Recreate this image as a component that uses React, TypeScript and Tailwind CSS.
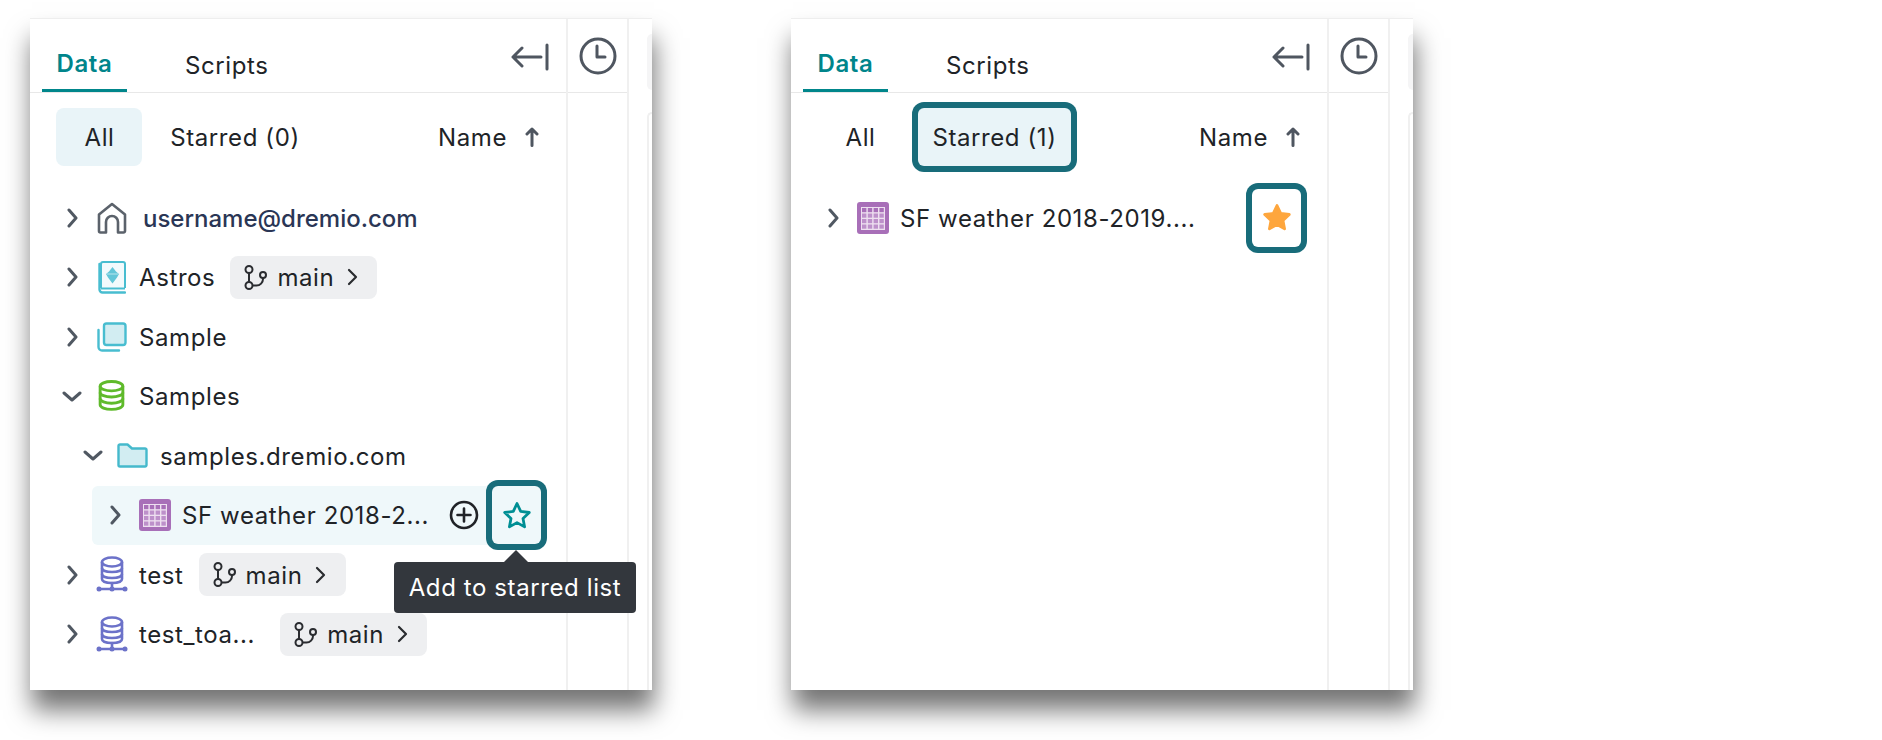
import type { ReactNode } from "react";

function Chevron({ open = false }: { open?: boolean }) {
  return open ? (
    <svg width="20" height="11" viewBox="0 0 20 11" fill="none" stroke="#505862" strokeWidth="3" strokeLinecap="round" strokeLinejoin="round">
      <path d="M2 2l8 7 8-7" />
    </svg>
  ) : (
    <svg width="11" height="20" viewBox="0 0 11 20" fill="none" stroke="#505862" strokeWidth="3" strokeLinecap="round" strokeLinejoin="round">
      <path d="M2 2l7 8-7 8" />
    </svg>
  );
}

function HomeIcon() {
  return (
    <svg width="30" height="32" viewBox="0 0 30 32" fill="none" stroke="#5b626b" strokeWidth="2.6" strokeLinejoin="round" strokeLinecap="round">
      <path d="M2 12.5L15 2l13 10.5V29a1.5 1.5 0 0 1-1.5 1.5H21V20a6 6 0 0 0-12 0v10.5H3.5A1.5 1.5 0 0 1 2 29z" />
    </svg>
  );
}

function AstrosIcon() {
  return (
    <svg width="28" height="33" viewBox="0 0 28 33" fill="none">
      <path d="M3 27V3a2 2 0 0 1 2-2h20a2 2 0 0 1 2 2v24" stroke="#48bdd0" strokeWidth="2" fill="#f2fafc" />
      <path d="M1.5 3v25.5a3 3 0 0 0 3 3H27" stroke="#48bdd0" strokeWidth="2.4" strokeLinecap="round" />
      <path d="M3 27.5h24" stroke="#48bdd0" strokeWidth="2" />
      <path d="M14.5 6l3.5 4.5 3 2.5-2 3.5-4.5 6-4.5-6-2-3.5 3-2.5z" fill="#62c6d8" />
      <path d="M9 13h11" stroke="#b8e6ee" strokeWidth="1" />
    </svg>
  );
}

function SampleIcon() {
  return (
    <svg width="30" height="30" viewBox="0 0 30 30" fill="none" stroke="#48bdd0" strokeWidth="2.4" strokeLinecap="round">
      <rect x="7" y="1.5" width="21.5" height="21.5" rx="2.5" fill="#d2edf2" />
      <path d="M1.5 8v17a3.5 3.5 0 0 0 3.5 3.5h17" />
    </svg>
  );
}

function GreenDbIcon() {
  return (
    <svg width="27" height="32" viewBox="0 0 26 31" fill="none" stroke="#5fba2b" strokeWidth="2.8">
      <ellipse cx="13" cy="6" rx="11" ry="4.5" />
      <path d="M2 6v18c0 2.5 5 4.5 11 4.5S24 26.5 24 24V6" />
      <path d="M2 12c0 2.5 5 4.5 11 4.5S24 14.5 24 12" />
      <path d="M2 18c0 2.5 5 4.5 11 4.5S24 20.5 24 18" />
    </svg>
  );
}

function NetworkDbIcon() {
  return (
    <svg width="32" height="37" viewBox="0 0 32 37" fill="none">
      <g stroke="#6c72c9" strokeWidth="2.6">
        <ellipse cx="16" cy="6" rx="10" ry="4.5" />
        <path d="M6 6v17c0 2.5 4.5 4 10 4s10-1.5 10-4V6" />
        <path d="M6 12c0 2.5 4.5 4 10 4s10-1.5 10-4" />
        <path d="M6 18c0 2.5 4.5 4 10 4s10-1.5 10-4" />
        <path d="M16 27v6M3 33h26" strokeLinecap="round" />
      </g>
      <circle cx="3" cy="33" r="2.5" fill="#6c72c9" />
      <circle cx="16" cy="33" r="2.5" fill="#6c72c9" />
      <circle cx="29" cy="33" r="2.5" fill="#6c72c9" />
    </svg>
  );
}

function FolderIcon() {
  return (
    <svg width="31" height="25" viewBox="0 0 31 25" fill="#d2edf2" stroke="#45b9cc" strokeWidth="2.4" strokeLinejoin="round">
      <path d="M1.5 3A1.5 1.5 0 0 1 3 1.5h7.5L15 5.5h13A1.5 1.5 0 0 1 29.5 7v15a1.5 1.5 0 0 1-1.5 1.5H3A1.5 1.5 0 0 1 1.5 22z" />
    </svg>
  );
}

function TableIcon() {
  const cells = [0, 1, 2, 3];
  return (
    <svg width="32" height="32" viewBox="0 0 32 32">
      <rect width="32" height="32" rx="3" fill="#a86fb8" />
      <rect x="4" y="5" width="24" height="23" fill="#eee0f0" />
      {cells.map((r) =>
        cells.map((c) => (
          <rect key={`${r}-${c}`} x={5 + c * 5.8} y={6 + r * 5.5} width="4.4" height="4.2" fill={r === 0 ? "#a86fb8" : "#bd90ca"} />
        )),
      )}
    </svg>
  );
}

function BranchIcon() {
  return (
    <svg width="24" height="25" viewBox="0 0 24 25" fill="none" stroke="#2a2c30" strokeWidth="2">
      <circle cx="5" cy="4.5" r="3.5" />
      <circle cx="5" cy="20.5" r="3.5" />
      <circle cx="19" cy="10" r="3" />
      <path d="M5 8v9M8.5 20.5h4A6.5 6.5 0 0 0 19 14v-1" />
    </svg>
  );
}

function StarIcon({ filled = false }: { filled?: boolean }) {
  return (
    <svg width="30" height="29" viewBox="0 0 30 29" fill={filled ? "#fea63d" : "none"} stroke={filled ? "#fea63d" : "#008f94"} strokeWidth="2.8" strokeLinejoin="round">
      <path d="M15 2.5l3.7 7.9 8.6 1.1-6.3 5.9 1.6 8.5L15 21.600 7.400 25.900 9 17.400 2.700 11.500l8.600-1.100z" />
    </svg>
  );
}

function Label({ className = "ml-[6px]", children }: { className?: string; children: ReactNode }) {
  return <span className={`pt-[2px] ${className}`}>{children}</span>;
}

function BranchChip({ className }: { className: string }) {
  return (
    <div className={`flex h-[43px] w-[147px] items-center rounded-[8px] bg-[#eeeff1] pl-[14px] ${className}`}>
      <BranchIcon />
      <Label className="ml-[9px]">main</Label>
      <span className="ml-[13px]">
        <svg width="11" height="18" viewBox="0 0 11 18" fill="none" stroke="#2a2c30" strokeWidth="2.2" strokeLinecap="round" strokeLinejoin="round">
          <path d="M2 2l7 7-7 7" />
        </svg>
      </span>
    </div>
  );
}

function TreeRow({ icon, children, open, indent = "pl-[24px]" }: { icon: ReactNode; children: ReactNode; open?: boolean; indent?: string }) {
  return (
    <div className={`flex h-[59.5px] items-center ${indent}`}>
      <span className="flex w-[36px] justify-center">
        <Chevron open={open} />
      </span>
      <span className="flex w-[43px] justify-center">{icon}</span>
      {children}
    </div>
  );
}

function Shell({ starred, children }: { starred: boolean; children: ReactNode }) {
  return (
    <div className="flex h-[672px] w-[622px] shrink-0 border-t border-[#eeeeee] bg-white text-[24px] leading-none tracking-[0.6px] text-[#202327] shadow-[2px_20px_24px_rgba(0,0,0,0.55)]">
      <div className="flex w-[538px] shrink-0 flex-col border-r-2 border-[#f0f0f0]">
        <div className="flex h-[74px] shrink-0 items-end border-b border-[#e8e8e8] pl-[12px]">
          <div className="flex h-[71px] w-[85px] items-center justify-center border-b-[3px] border-[#00868b] pt-[18px] font-semibold text-[#00858b]">Data</div>
          <div className="mb-[9px] ml-[58px] h-[44px] pt-[15px] text-[#202327]">Scripts</div>
          <span className="mb-[21px] ml-auto mr-[17px]">
            <svg width="38" height="28" viewBox="0 0 38 28" fill="none" stroke="#4f5660" strokeWidth="3" strokeLinecap="round" strokeLinejoin="round">
              <path d="M2 14h28M11 5l-9 9 9 9M36 2v24" />
            </svg>
          </span>
        </div>
        <div className="flex items-center pl-[26px] pr-[27px] pt-[15px]">
          <div className={`flex h-[58px] w-[86px] items-center justify-center rounded-[8px] pl-[1px] pt-[2px] ${starred ? "" : "bg-[#e9f4f8]"}`}>All</div>
          <div className={`ml-[15px] flex h-[58px] w-[153px] items-center justify-center rounded-[6px] pt-[2px] ${starred ? "bg-[#e9f4f8] ring-[6px] ring-[#186c7a]" : "pl-[3px]"}`}>
            {starred ? "Starred (1)" : "Starred (0)"}
          </div>
          <Label className="ml-auto">Name</Label>
          <span className="ml-[18px]">
            <svg width="14" height="20" viewBox="0 0 14 20" fill="none" stroke="#4f5660" strokeWidth="3" strokeLinecap="round" strokeLinejoin="round">
              <path d="M7 18.5V2M2 7l5-5 5 5" />
            </svg>
          </span>
        </div>
        <div className="mt-[22px]">{children}</div>
      </div>
      <div className="flex w-[61px] shrink-0 flex-col border-r-2 border-[#f0f0f0]">
        <div className="flex h-[74px] items-center justify-center border-b border-[#e8e8e8] pt-[1px]">
          <svg width="38" height="38" viewBox="0 0 38 38" fill="none" stroke="#4f5660" strokeWidth="3" strokeLinecap="round" strokeLinejoin="round">
            <circle cx="19" cy="19" r="17" />
            <path d="M18 9v11h8" />
          </svg>
        </div>
      </div>
      <div className="flex min-w-0 flex-1 flex-col pl-[18px]">
        <div className="h-[15px] shrink-0" />
        <div className="h-[56px] shrink-0 rounded-l-[6px] bg-[#f5f5f6]" />
        <div className="mt-[22px] flex-1 rounded-tl-[6px] border-l-2 border-t-2 border-[#f0f0f0]" />
      </div>
    </div>
  );
}

export default function App() {
  return (
    <div className="flex h-[740px] gap-[139px] overflow-hidden bg-white pl-[30px] pt-[18px] font-['Inter',sans-serif]">
      <Shell starred={false}>
        <TreeRow icon={<HomeIcon />}>
          <Label className="ml-[10px] font-[450] tracking-normal text-[#2a3655]">username@dremio.com</Label>
        </TreeRow>
        <TreeRow icon={<AstrosIcon />}>
          <Label>Astros</Label>
          <BranchChip className="ml-[15px]" />
        </TreeRow>
        <TreeRow icon={<SampleIcon />}>
          <Label>Sample</Label>
        </TreeRow>
        <TreeRow icon={<GreenDbIcon />} open>
          <Label>Samples</Label>
        </TreeRow>
        <TreeRow icon={<FolderIcon />} open indent="pl-[45px]">
          <Label>samples.dremio.com</Label>
        </TreeRow>
        <div className="ml-[62px] mr-[25px] flex h-[59.5px] items-center rounded-[6px] bg-[#eff8fa] pl-[5px]">
          <span className="flex w-[36px] justify-center">
            <Chevron />
          </span>
          <span className="flex w-[43px] justify-center">
            <TableIcon />
          </span>
          <Label>SF weather 2018-2...</Label>
          <span className="ml-auto mr-[13px]">
            <svg width="30" height="30" viewBox="0 0 30 30" fill="none" stroke="#202327" strokeWidth="2.6" strokeLinecap="round">
              <circle cx="15" cy="15" r="13" />
              <path d="M15 8.5v13M8.5 15h13" />
            </svg>
          </span>
          <div className="relative flex h-[58px] w-[49px] items-center justify-center rounded-[6px] bg-[#eff8fa] ring-[6px] ring-[#186c7a]">
            <StarIcon />
            <div className="absolute left-[-98px] top-[76px] z-10 flex h-[51px] w-[242px] items-center justify-center rounded-[4px] bg-[#33373d] pt-[1px] text-white">
              <span className="absolute left-[110px] top-[-12px] h-0 w-0 border-x-[12px] border-b-[12px] border-x-transparent border-b-[#33373d]" />
              Add to starred list
            </div>
          </div>
        </div>
        <TreeRow icon={<NetworkDbIcon />}>
          <Label>test</Label>
          <BranchChip className="ml-[15px]" />
        </TreeRow>
        <TreeRow icon={<NetworkDbIcon />}>
          <Label>test_toa...</Label>
          <BranchChip className="ml-[25px]" />
        </TreeRow>
      </Shell>
      <Shell starred>
        <div className="flex h-[59.5px] items-center pl-[24px] pr-[26px]">
          <span className="flex w-[36px] justify-center">
            <Chevron />
          </span>
          <span className="flex w-[43px] justify-center">
            <TableIcon />
          </span>
          <Label>SF weather 2018-2019....</Label>
          <div className="ml-auto flex h-[58px] w-[49px] items-center justify-center rounded-[6px] ring-[6px] ring-[#186c7a]">
            <StarIcon filled />
          </div>
        </div>
      </Shell>
    </div>
  );
}
